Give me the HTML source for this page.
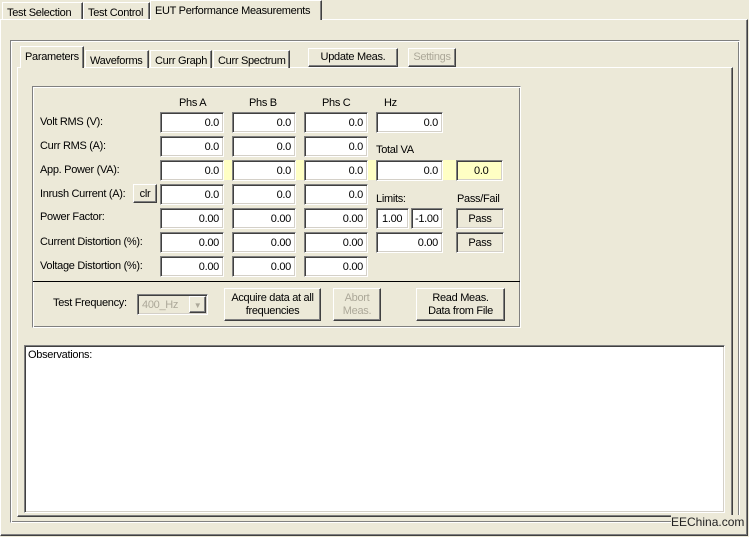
<!DOCTYPE html>
<html><head><style>
*{box-sizing:border-box;margin:0;padding:0}
body{width:749px;height:537px;background:#ece9d8;font-family:"Liberation Sans",sans-serif;font-size:11px;letter-spacing:-0.3px;color:#000;position:relative;overflow:hidden}
.a{position:absolute}
.t{position:absolute;white-space:nowrap}
.f{position:absolute;height:21px;background:#fff;border-top:1px solid #808080;border-left:1px solid #808080;border-right:1px solid #fff;border-bottom:1px solid #fff;box-shadow:inset 1px 1px 0 #404040,inset -1px -1px 0 #d4d0c8;text-align:right;padding:4px 4px 0 0}
.b{position:absolute;background:#ece9d8;border-top:1px solid #fff;border-left:1px solid #fff;border-right:1px solid #404040;border-bottom:1px solid #404040;box-shadow:inset -1px -1px 0 #808080;text-align:center;line-height:13px}
.tab{position:absolute;border-top:1px solid #fff;border-left:1px solid #fff;border-right:1px solid #404040;box-shadow:inset -1px 0 0 #808080;padding:4px 0 0 4px;white-space:nowrap}
.y{position:absolute;background:#ffffc4}
.g{color:#aca899}
</style></head><body>
<div class="tab" style="left:2px;top:2px;width:81px;height:18px">Test Selection</div>
<div class="tab" style="left:83px;top:2px;width:67px;height:18px">Test Control</div>
<div class="tab" style="left:150px;top:0;width:172px;height:20px;padding-top:4px;background:#ece9d8;z-index:2">EUT Performance Measurements</div>
<div class="a" style="left:0;top:19px;width:748px;height:517px;border-top:1px solid #fff;border-left:1px solid #fff;border-right:1px solid #404040;border-bottom:1px solid #404040;box-shadow:inset -1px -1px 0 #808080"></div>
<div class="a" style="left:10px;top:40px;width:730px;height:483px;border-top:1px solid #808080;border-left:1px solid #808080;border-right:1px solid #fff;border-bottom:1px solid #fff;box-shadow:inset 1px 1px 0 #fff,inset -1px -1px 0 #808080"></div>
<div class="a" style="left:17px;top:67px;width:716px;height:450px;border-top:1px solid #fff;border-left:1px solid #fff;border-right:1px solid #404040;border-bottom:1px solid #404040;box-shadow:inset -1px -1px 0 #808080"></div>
<div class="tab" style="left:20px;top:46px;width:64px;height:22px;background:#ece9d8;z-index:2">Parameters</div>
<div class="tab" style="left:85px;top:50px;width:64px;height:18px">Waveforms</div>
<div class="tab" style="left:150px;top:50px;width:62px;height:18px">Curr Graph</div>
<div class="tab" style="left:213px;top:50px;width:77px;height:18px">Curr Spectrum</div>
<div class="b" style="left:308px;top:48px;width:90px;height:19px;padding-top:2px">Update Meas.</div>
<div class="b g" style="left:408px;top:48px;width:48px;height:19px;padding-top:2px">Settings</div>
<div class="a" style="left:32px;top:86px;width:489px;height:242px;border-top:1px solid #808080;border-left:1px solid #808080;border-right:1px solid #fff;border-bottom:1px solid #fff;box-shadow:inset 1px 1px 0 #fff,inset -1px -1px 0 #808080"></div>
<div class="a" style="left:33px;top:281px;width:487px;height:1px;background:#000"></div>
<div class="t" style="left:179px;top:97px">Phs A</div>
<div class="t" style="left:249px;top:97px">Phs B</div>
<div class="t" style="left:322px;top:97px">Phs C</div>
<div class="t" style="left:384px;top:97px">Hz</div>
<div class="t" style="left:40px;top:116px">Volt RMS (V):</div>
<div class="t" style="left:40px;top:140px">Curr RMS (A):</div>
<div class="t" style="left:40px;top:164px">App. Power (VA):</div>
<div class="t" style="left:40px;top:188px">Inrush Current (A):</div>
<div class="t" style="left:40px;top:211px">Power Factor:</div>
<div class="t" style="left:40px;top:236px">Current Distortion (%):</div>
<div class="t" style="left:40px;top:260px">Voltage Distortion (%):</div>
<div class="b" style="left:133px;top:184px;width:24px;height:19px;padding-top:3px">clr</div>
<div class="y" style="left:224px;top:160px;width:8px;height:20px"></div>
<div class="y" style="left:296px;top:160px;width:8px;height:20px"></div>
<div class="y" style="left:368px;top:160px;width:8px;height:20px"></div>
<div class="y" style="left:443px;top:160px;width:14px;height:20px"></div>
<div class="f" style="left:160px;top:112px;width:64px">0.0</div>
<div class="f" style="left:232px;top:112px;width:64px">0.0</div>
<div class="f" style="left:304px;top:112px;width:64px">0.0</div>
<div class="f" style="left:376px;top:112px;width:67px">0.0</div>
<div class="f" style="left:160px;top:136px;width:64px">0.0</div>
<div class="f" style="left:232px;top:136px;width:64px">0.0</div>
<div class="f" style="left:304px;top:136px;width:64px">0.0</div>
<div class="t" style="left:376px;top:144px">Total VA</div>
<div class="f" style="left:160px;top:160px;width:64px">0.0</div>
<div class="f" style="left:232px;top:160px;width:64px">0.0</div>
<div class="f" style="left:304px;top:160px;width:64px">0.0</div>
<div class="f" style="left:376px;top:160px;width:67px">0.0</div>
<div class="f" style="left:456px;top:160px;width:47px;background:#ffffc4;text-align:left;padding-left:17px">0.0</div>
<div class="f" style="left:160px;top:184px;width:64px">0.0</div>
<div class="f" style="left:232px;top:184px;width:64px">0.0</div>
<div class="f" style="left:304px;top:184px;width:64px">0.0</div>
<div class="t" style="left:376px;top:193px">Limits:</div>
<div class="t" style="left:457px;top:193px">Pass/Fail</div>
<div class="f" style="left:160px;top:208px;width:64px">0.00</div>
<div class="f" style="left:232px;top:208px;width:64px">0.00</div>
<div class="f" style="left:304px;top:208px;width:64px">0.00</div>
<div class="f" style="left:376px;top:208px;width:33px;text-align:left;padding-left:5px">1.00</div>
<div class="f" style="left:411px;top:208px;width:32px;text-align:left;padding-left:3px">-1.00</div>
<div class="f" style="left:456px;top:208px;width:48px;background:#ece9d8;text-align:center;padding:4px 0 0">Pass</div>
<div class="f" style="left:160px;top:232px;width:64px">0.00</div>
<div class="f" style="left:232px;top:232px;width:64px">0.00</div>
<div class="f" style="left:304px;top:232px;width:64px">0.00</div>
<div class="f" style="left:376px;top:232px;width:67px">0.00</div>
<div class="f" style="left:456px;top:232px;width:48px;background:#ece9d8;text-align:center;padding:4px 0 0">Pass</div>
<div class="f" style="left:160px;top:256px;width:64px">0.00</div>
<div class="f" style="left:232px;top:256px;width:64px">0.00</div>
<div class="f" style="left:304px;top:256px;width:64px">0.00</div>
<div class="t" style="left:53px;top:297px">Test Frequency:</div>
<div class="f" style="left:137px;top:294px;width:71px;background:#ece9d8;text-align:left;padding-left:4px;color:#aca899">400_Hz</div>
<div class="b" style="left:189px;top:296px;width:17px;height:17px;color:#aca899;font-size:8px;padding-top:2px">▼</div>
<div class="b" style="left:224px;top:288px;width:97px;height:33px;padding-top:3px">Acquire data at all<br>frequencies</div>
<div class="b g" style="left:333px;top:288px;width:48px;height:33px;padding-top:3px">Abort<br>Meas.</div>
<div class="b" style="left:416px;top:288px;width:89px;height:33px;padding-top:3px">Read Meas.<br>Data from File</div>
<div class="a" style="left:24px;top:345px;width:701px;height:168px;background:#fff;border-top:1px solid #808080;border-left:1px solid #808080;border-right:1px solid #fff;border-bottom:1px solid #fff;box-shadow:inset 1px 1px 0 #404040,inset -1px -1px 0 #d4d0c8;padding:3px 3px">Observations:</div>
<div class="t" style="left:671px;top:515px;font-size:12px;letter-spacing:0;color:#222;background:#ece9d8">EEChina.com</div>
</body></html>
